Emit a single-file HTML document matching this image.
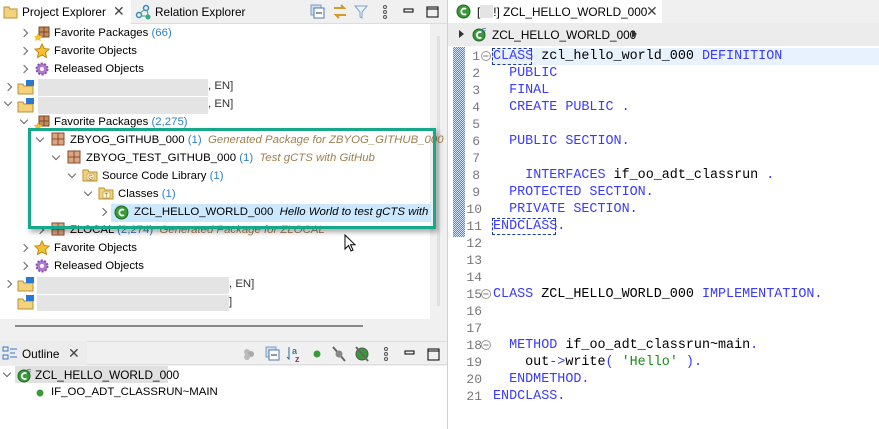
<!DOCTYPE html>
<html><head><meta charset="utf-8"><style>
*{margin:0;padding:0;box-sizing:border-box}
body{width:879px;height:429px;overflow:hidden;background:#f0f0f0;font-family:"Liberation Sans",sans-serif;font-size:11.4px;color:#000;position:relative}
.a{position:absolute}
.row{position:absolute;height:18px;line-height:18px;white-space:nowrap}
.cnt{color:#2e82c4}
.desc{color:#a08050;font-style:italic}
.chev{position:absolute;width:6px;height:6px;border-right:1.3px solid #666;border-bottom:1.3px solid #666}
.cr{transform:rotate(-45deg)}
.cd{transform:rotate(45deg)}
.code{position:absolute;left:493px;font-family:"Liberation Mono",monospace;font-size:13.4px;line-height:17px;white-space:pre;color:#000}
.ln{position:absolute;left:466px;width:16px;text-align:right;font-family:"Liberation Mono",monospace;font-size:13px;line-height:17px;color:#787878}
.k{color:#3a3aff}
.s{color:#1a8a1a}
.tt{font-size:11.8px}
</style></head><body>
<div class="a" style="left:0;top:0;width:447px;height:24px;background:#f0f0f0;border-bottom:1px solid #ddd"></div>
<div class="a" style="left:0;top:0;width:131px;height:24px;background:#fff"></div>
<svg class="a" style="left:3px;top:4px" width="16" height="16"><path d="M1 3h5l1 2h7v9H1z" fill="#f4d27a" stroke="#b8903a"/></svg>
<div class="a tt" style="left:22px;top:5px">Project Explorer</div>
<div class="a" style="left:113px;top:3px;font-size:14px;color:#444">✕</div>
<svg class="a" style="left:135px;top:4px" width="16" height="16"><circle cx="4" cy="11" r="2.5" fill="none" stroke="#3a8ac0" stroke-width="1.5"/><circle cx="11" cy="4" r="2.5" fill="none" stroke="#3a8ac0" stroke-width="1.5"/><circle cx="13" cy="13" r="2.5" fill="#3a8" /><path d="M5 9l4-3M12 6l1 5M6 12h5" stroke="#3a8" /></svg>
<div class="a tt" style="left:155px;top:5px">Relation Explorer</div>
<svg class="a" style="left:310px;top:4px" width="130" height="16"><rect x="1" y="1" width="10" height="10" fill="#cde" stroke="#7a9ec0"/><rect x="4" y="4" width="10" height="10" fill="#fff" stroke="#4a7ab0"/><path d="M6 9h6" stroke="#235"/><path d="M24 4h10l-3-3M36 11H26l3 3" stroke="#d49a2a" stroke-width="2" fill="none"/><path d="M45 2h12l-5 6v6l-2-1V8z" fill="none" stroke="#7aa6cc"/><circle cx="75" cy="3" r="1.5" fill="none" stroke="#555"/><circle cx="75" cy="8" r="1.5" fill="none" stroke="#555"/><circle cx="75" cy="13" r="1.5" fill="none" stroke="#555"/><rect x="94" y="5" width="9" height="3" fill="none" stroke="#000"/><rect x="117" y="3" width="11" height="10" fill="none" stroke="#000"/><path d="M117 5h11" stroke="#000"/></svg>
<div class="a" style="left:0;top:24px;width:430px;height:295px;background:#fff"></div>
<div class="a" style="left:437px;top:36px;width:3px;height:270px;background:#e0e0e0"></div>
<div class="a" style="left:0;top:319px;width:447px;height:17px;background:#f0f0f0"></div>
<div class="a" style="left:15px;top:325px;width:348px;height:2px;background:#888"></div>

<div class="chev cr" style="left:21px;top:30px"></div>
<svg class="a" style="left:34px;top:25px" width="16" height="16"><rect x="5" y="2" width="10" height="10" fill="#c58a5a" stroke="#7a4a2a"/><path d="M10 2v10M5 7h10" stroke="#7a4a2a"/><path d="M4 8l1.5 3 3 .3-2.3 2 .7 3-2.9-1.6L1 16l.7-3-2-2 3-.3z" fill="#f5c030"/></svg>
<div class="row" style="left:54px;top:24px">Favorite Packages <span class="cnt">(66)</span></div>
<div class="chev cr" style="left:21px;top:48px"></div>
<svg class="a" style="left:34px;top:43px" width="16" height="16"><path d="M8 1l2.2 4.5 5 .6-3.7 3.4 1 4.9L8 12l-4.5 2.4 1-4.9L.8 6.1l5-.6z" fill="#f5c030" stroke="#c08a10"/></svg>
<div class="row" style="left:54px;top:42px">Favorite Objects</div>
<div class="chev cr" style="left:21px;top:66px"></div>
<svg class="a" style="left:34px;top:61px" width="16" height="16"><circle cx="8" cy="8" r="5.5" fill="#b078d0" stroke="#8a50b0" stroke-width="2" stroke-dasharray="2 1.5"/><circle cx="8" cy="8" r="2" fill="#fff"/></svg>
<div class="row" style="left:54px;top:60px">Released Objects</div>

<div class="chev cr" style="left:5px;top:84px"></div>
<svg class="a" style="left:17px;top:79px" width="18" height="16"><path d="M1 5h5l1 2h9v8H1z" fill="#f4d27a" stroke="#b8903a"/><rect x="9" y="1" width="8" height="6" fill="#2a78d0"/></svg>
<div class="a" style="left:38px;top:79px;width:170px;height:17px;background:#e4e4e4"></div>
<div class="row" style="left:208px;top:77px;color:#333">, EN]</div>
<div class="chev cd" style="left:5px;top:99px"></div>
<svg class="a" style="left:17px;top:97px" width="18" height="16"><path d="M1 5h5l1 2h9v8H1z" fill="#f4d27a" stroke="#b8903a"/><rect x="9" y="1" width="8" height="6" fill="#2a78d0"/></svg>
<div class="a" style="left:38px;top:97px;width:170px;height:17px;background:#e4e4e4"></div>
<div class="row" style="left:208px;top:95px;color:#333">, EN]</div>

<div class="chev cd" style="left:21px;top:117px"></div>
<svg class="a" style="left:34px;top:114px" width="16" height="16"><rect x="5" y="2" width="10" height="10" fill="#c58a5a" stroke="#7a4a2a"/><path d="M10 2v10M5 7h10" stroke="#7a4a2a"/><path d="M4 8l1.5 3 3 .3-2.3 2 .7 3-2.9-1.6L1 16l.7-3-2-2 3-.3z" fill="#f5c030"/></svg>
<div class="row" style="left:54px;top:113px">Favorite Packages <span class="cnt">(2,275)</span></div>

<div class="chev cd" style="left:37px;top:135px"></div>
<svg class="a" style="left:51px;top:132px" width="14" height="14"><rect x="1" y="1" width="12" height="12" fill="#d9a584" stroke="#8a4a2a"/><path d="M7 1v12M1 7h12" stroke="#8a4a2a"/></svg>
<div class="row" style="left:70px;top:131px">ZBYOG_GITHUB_000 <span class="cnt">(1)</span> &nbsp;<span class="desc">Generated Package for ZBYOG_GITHUB_000</span></div>
<div class="chev cd" style="left:53px;top:153px"></div>
<svg class="a" style="left:67px;top:150px" width="14" height="14"><rect x="1" y="1" width="12" height="12" fill="#d9a584" stroke="#8a4a2a"/><path d="M7 1v12M1 7h12" stroke="#8a4a2a"/></svg>
<div class="row" style="left:86px;top:149px">ZBYOG_TEST_GITHUB_000 <span class="cnt">(1)</span> &nbsp;<span class="desc">Test gCTS with GitHub</span></div>
<div class="chev cd" style="left:69px;top:171px"></div>
<svg class="a" style="left:82px;top:167px" width="16" height="16"><path d="M1 3h5l1 2h8v9H1z" fill="#f4d27a" stroke="#b8903a"/><rect x="5" y="7" width="7" height="6" fill="#fff8e0" stroke="#b8903a" stroke-width=".6"/><text x="6.3" y="12.5" font-size="6" fill="#8a6a2a" font-family="Liberation Sans">G</text></svg>
<div class="row" style="left:102px;top:167px">Source Code Library <span class="cnt">(1)</span></div>
<div class="chev cd" style="left:85px;top:189px"></div>
<svg class="a" style="left:98px;top:185px" width="16" height="16"><path d="M1 3h5l1 2h8v9H1z" fill="#f4d27a" stroke="#b8903a"/><rect x="5" y="7" width="7" height="6" fill="#fff8e0" stroke="#b8903a" stroke-width=".6"/><text x="6.5" y="12.5" font-size="6" fill="#8a6a2a" font-family="Liberation Sans">T</text></svg>
<div class="row" style="left:118px;top:185px">Classes <span class="cnt">(1)</span></div>
<div class="a" style="left:111px;top:204px;width:320px;height:18px;background:#cce8ff"></div>
<div class="chev cr" style="left:100px;top:209px"></div>
<svg class="a" style="left:114px;top:205px" width="15" height="15"><circle cx="7.5" cy="7.5" r="6.5" fill="#3a9a3a" stroke="#1a6a1a"/><path d="M10 5a3 3 0 1 0 0 5" fill="none" stroke="#fff" stroke-width="1.8"/></svg>
<div class="row" style="left:134px;top:203px">ZCL_HELLO_WORLD_000 &nbsp;<i>Hello World to test gCTS with</i></div>

<div class="chev cr" style="left:37px;top:227px"></div>
<svg class="a" style="left:51px;top:222px" width="14" height="14"><rect x="1" y="1" width="12" height="12" fill="#d9a584" stroke="#8a4a2a"/><path d="M7 1v12M1 7h12" stroke="#8a4a2a"/></svg>
<div class="row" style="left:70px;top:221px">ZLOCAL <span class="cnt">(2,274)</span> &nbsp;<span class="desc">Generated Package for ZLOCAL</span></div>
<div class="chev cr" style="left:21px;top:245px"></div>
<svg class="a" style="left:34px;top:240px" width="16" height="16"><path d="M8 1l2.2 4.5 5 .6-3.7 3.4 1 4.9L8 12l-4.5 2.4 1-4.9L.8 6.1l5-.6z" fill="#f5c030" stroke="#c08a10"/></svg>
<div class="row" style="left:54px;top:239px">Favorite Objects</div>
<div class="chev cr" style="left:21px;top:263px"></div>
<svg class="a" style="left:34px;top:258px" width="16" height="16"><circle cx="8" cy="8" r="5.5" fill="#b078d0" stroke="#8a50b0" stroke-width="2" stroke-dasharray="2 1.5"/><circle cx="8" cy="8" r="2" fill="#fff"/></svg>
<div class="row" style="left:54px;top:257px">Released Objects</div>
<div class="chev cr" style="left:5px;top:281px"></div>
<svg class="a" style="left:17px;top:276px" width="18" height="16"><path d="M1 5h5l1 2h9v8H1z" fill="#f4d27a" stroke="#b8903a"/><rect x="9" y="1" width="8" height="6" fill="#2a78d0"/></svg>
<div class="a" style="left:37px;top:277px;width:192px;height:17px;background:#e4e4e4"></div>
<div class="row" style="left:229px;top:275px;color:#333">, EN]</div>
<svg class="a" style="left:17px;top:294px" width="18" height="16"><path d="M1 5h5l1 2h9v8H1z" fill="#f4d27a" stroke="#b8903a"/><rect x="9" y="1" width="8" height="6" fill="#2a78d0"/></svg>
<div class="a" style="left:37px;top:295px;width:192px;height:16px;background:#e4e4e4"></div>
<div class="row" style="left:229px;top:293px;color:#333">]</div>

<div class="a" style="left:28px;top:128px;width:408px;height:101px;border:3px solid #17a88a;box-shadow:2px 3px 5px rgba(0,0,0,.35)"></div>
<svg class="a" style="left:344px;top:234px" width="14" height="20"><path d="M1 1v14l3.5-3.5 2.5 5.5 2-1-2.5-5.3H11z" fill="#fff" stroke="#000"/></svg>

<div class="a" style="left:0;top:341px;width:447px;height:24px;background:#f0f0f0;border-top:1px solid #ddd;border-bottom:1px solid #ddd"></div>
<div class="a" style="left:0;top:341px;width:87px;height:24px;background:#ececec"></div>
<svg class="a" style="left:2px;top:346px" width="16" height="16"><rect x="1" y="1" width="5" height="4" fill="none" stroke="#3a7ac0"/><rect x="1" y="9" width="5" height="4" fill="none" stroke="#3a7ac0"/><path d="M8 3h7M8 7h5M8 11h7" stroke="#3a7ac0"/></svg>
<div class="a tt" style="left:22px;top:347px">Outline</div>
<div class="a" style="left:68px;top:345px;font-size:14px;color:#444">✕</div>
<svg class="a" style="left:240px;top:345px" width="200" height="18"><circle cx="7" cy="7" r="3" fill="#bbb"/><circle cx="11" cy="9" r="3" fill="#aaa"/><circle cx="7" cy="12" r="3" fill="#bbb"/><rect x="26" y="2" width="10" height="10" fill="#cde" stroke="#7a9ec0"/><rect x="29" y="5" width="10" height="10" fill="#fff" stroke="#4a7ab0"/><path d="M31 10h6" stroke="#235"/><path d="M49 2v12l-2-2" stroke="#2a6aa0" fill="none"/><text x="52" y="9" font-size="9" fill="#1a8a8a" font-family="Liberation Sans" font-weight="bold">a</text><text x="55" y="17" font-size="9" fill="#9a2a9a" font-family="Liberation Sans" font-weight="bold">z</text><circle cx="77" cy="9" r="3.5" fill="#3a9a3a"/><path d="M93 2l12 14" stroke="#666" stroke-width="2"/><circle cx="99" cy="9" r="3.5" fill="#888"/><circle cx="122" cy="9" r="6" fill="#3a9a3a" stroke="#555"/><path d="M116 2l12 14" stroke="#666" stroke-width="2"/><circle cx="146" cy="4" r="1.5" fill="none" stroke="#555"/><circle cx="146" cy="9" r="1.5" fill="none" stroke="#555"/><circle cx="146" cy="14" r="1.5" fill="none" stroke="#555"/><rect x="165" y="6" width="9" height="3" fill="none" stroke="#000"/><rect x="188" y="4" width="11" height="11" fill="none" stroke="#000"/><path d="M188 6h11" stroke="#000"/></svg>
<div class="a" style="left:0;top:366px;width:447px;height:63px;background:#fff"></div>
<div class="chev cd" style="left:4px;top:370px"></div>
<div class="a" style="left:15px;top:366px;width:153px;height:17px;background:#e0e0e0"></div>
<svg class="a" style="left:17px;top:367px" width="16" height="16"><circle cx="7" cy="9" r="6" fill="#3a9a3a" stroke="#1a6a1a"/><path d="M9.5 6.5a3 3 0 1 0 0 5" fill="none" stroke="#fff" stroke-width="1.8"/><text x="10" y="7" font-size="7" fill="#2a5aa0" font-family="Liberation Sans">F</text></svg>
<div class="row tt" style="left:35px;top:366px">ZCL_HELLO_WORLD_000</div>
<svg class="a" style="left:36px;top:389px" width="8" height="8"><circle cx="4" cy="4" r="3.5" fill="#3a9a3a"/></svg>
<div class="row" style="left:51px;top:383px">IF_OO_ADT_CLASSRUN~MAIN</div>

<div class="a" style="left:447px;top:0;width:432px;height:429px;background:#fff;border-left:1px solid #d0d0d0"></div>
<div class="a" style="left:448px;top:0;width:431px;height:23px;background:#f0f0f0"></div>
<div class="a" style="left:448px;top:0;width:214px;height:23px;background:#fff"></div>
<svg class="a" style="left:456px;top:4px" width="15" height="15"><circle cx="7.5" cy="7.5" r="6.5" fill="#3a9a3a" stroke="#1a6a1a"/><path d="M10 5a3 3 0 1 0 0 5" fill="none" stroke="#fff" stroke-width="1.8"/></svg>
<div class="a tt" style="left:477px;top:5px">[<span style="display:inline-block;width:13px;height:13px;background:#e4e4e4;vertical-align:-2px"></span>!] ZCL_HELLO_WORLD_000</div>
<div class="a" style="left:646px;top:3px;font-size:14px;color:#444">✕</div>
<div class="a" style="left:448px;top:23px;width:431px;height:23px;background:#ececec"></div>
<div class="a" style="left:459px;top:30px;border-left:5px solid #333;border-top:4px solid transparent;border-bottom:4px solid transparent"></div>
<svg class="a" style="left:472px;top:26px" width="16" height="16"><circle cx="7" cy="9" r="6" fill="#3a9a3a" stroke="#1a6a1a"/><path d="M9.5 6.5a3 3 0 1 0 0 5" fill="none" stroke="#fff" stroke-width="1.8"/><text x="10" y="7" font-size="7" fill="#2a5aa0" font-family="Liberation Sans">F</text></svg>
<div class="a tt" style="left:492px;top:28px">ZCL_HELLO_WORLD_000</div>
<div class="a" style="left:632px;top:30px;border-left:5px solid #333;border-top:4px solid transparent;border-bottom:4px solid transparent"></div>
<div class="a" style="left:453px;top:47px;width:12px;height:190px;background:repeating-conic-gradient(#4a90e0 0 25%,#cfe2f8 0 50%) 0 0/2px 2px"></div>
<div class="a" style="left:492px;top:48px;width:387px;height:17px;background:#e8f2fe"></div>
<div class="a" style="left:492px;top:48px;width:40px;height:17px;border:1px dashed #1a3aa0"></div>
<div class="a" style="left:492px;top:218px;width:64px;height:17px;border:1px dashed #1a3aa0"></div>
<svg class="a" style="left:480px;top:50px" width="12" height="12"><circle cx="6" cy="6" r="4.5" fill="#fff" stroke="#999"/><path d="M3.5 6h5" stroke="#777"/></svg>
<svg class="a" style="left:480px;top:288px" width="12" height="12"><circle cx="6" cy="6" r="4.5" fill="#fff" stroke="#999"/><path d="M3.5 6h5" stroke="#777"/></svg>
<svg class="a" style="left:480px;top:339px" width="12" height="12"><circle cx="6" cy="6" r="4.5" fill="#fff" stroke="#999"/><path d="M3.5 6h5" stroke="#777"/></svg>
<div class="ln" style="top:48px;left:464px">1<br>2<br>3<br>4<br>5<br>6<br>7<br>8<br>9<br></div>
<div class="ln" style="top:201px;left:466px">10<br>11<br>12<br>13<br>14<br>15<br>16<br>17<br>18<br>19<br>20<br>21</div>
<div class="code" style="top:48px"><span class="k">CLASS</span> zcl_hello_world_000 <span class="k">DEFINITION</span>
  <span class="k">PUBLIC</span>
  <span class="k">FINAL</span>
  <span class="k">CREATE PUBLIC .</span>

  <span class="k">PUBLIC SECTION.</span>

    <span class="k">INTERFACES</span> if_oo_adt_classrun <span class="k">.</span>
  <span class="k">PROTECTED SECTION.</span>
  <span class="k">PRIVATE SECTION.</span>
<span class="k">ENDCLASS.</span>



<span class="k">CLASS</span> ZCL_HELLO_WORLD_000 <span class="k">IMPLEMENTATION.</span>


  <span class="k">METHOD</span> if_oo_adt_classrun~main<span class="k">.</span>
    out<span class="k">-&gt;</span>write<span class="k">(</span> <span class="s">'Hello'</span> <span class="k">).</span>
  <span class="k">ENDMETHOD.</span>
<span class="k">ENDCLASS.</span></div>
</body></html>
